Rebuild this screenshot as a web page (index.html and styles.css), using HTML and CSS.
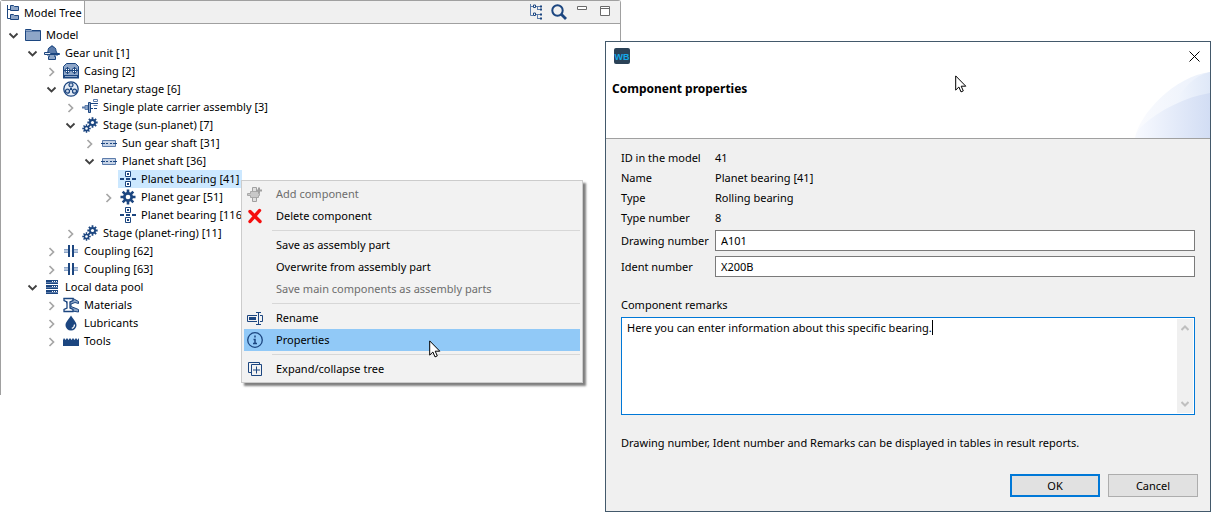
FILE: index.html
```
<!DOCTYPE html>
<html lang="en">
<head>
<meta charset="utf-8">
<title>Model Tree</title>
<link rel="stylesheet" href="styles.css">
</head>
<body>
<svg class="sprite" aria-hidden="true">
  <symbol id="down" viewBox="0 0 11 11"><path d="M1.5 3.5 5.5 7.5 9.5 3.5" fill="none" stroke="#404040" stroke-width="1.8"/></symbol>
  <symbol id="right" viewBox="0 0 11 11"><path d="M3.5 2 7.5 6 3.5 10" fill="none" stroke="#a6a6a6" stroke-width="1.7"/></symbol>
  <symbol id="tab-tree" viewBox="0 0 16 16"><path d="M1.5 0V13.5H4M1.5 4.500H4" fill="none" stroke="#1c4680"/><path d="M4.500 .500h3l1 1h4v4h-8zM4.500 9.500h3l1 1h4v4h-8z" fill="#8ea6c8" stroke="#1c4680"/></symbol>
  <symbol id="folder" viewBox="0 0 16 16"><path d="M.5 3.500V2.500H6L7 3.500H15.500V13.500H.5z" fill="#8ea6c8" stroke="#1c4680"/><path d="M1 4.500h14" stroke="#5c7cab"/></symbol>
  <symbol id="gearunit" viewBox="0 0 16 16"><path d="M4 6C4 3 5.500 2 7 2V1h2v1c2 0 3 1.500 3 4l2 4H3z" fill="#5c7cab" stroke="#1c4680"/><path d="M.5 7.500h5l1 1h9v1H10l-1 0H.5z" fill="#e5ecf5" stroke="#1c4680"/><path d="M5.500 10.500v1h-1v3h7v-3h-1v-1" fill="#8ea6c8" stroke="#1c4680"/></symbol>
  <symbol id="casing" viewBox="0 0 16 16"><path d="M.5 14V3.500L3.500.5h9l3 3V14z" fill="#8ea6c8" stroke="#1c4680"/><path d="M0 12h16v3.500H0z" fill="#1c4680"/><path d="M2 13.500h12" stroke="#8ea6c8"/><circle cx="4.500" cy="7.500" r="2.500" fill="#fff" stroke="#1c4680"/><circle cx="11.500" cy="7.500" r="2.500" fill="#fff" stroke="#1c4680"/><path d="M1 7.500h14M4.500 4v7M11.500 4v7" stroke="#1c4680"/></symbol>
  <symbol id="planetary" viewBox="0 0 16 16"><circle cx="8" cy="8" r="7.200" fill="#e5ecf5" stroke="#1c4680" stroke-width="1.300"/><g fill="#c6d3e6" stroke="#1c4680" stroke-width="1.200"><circle cx="8" cy="4" r="2"/><circle cx="4.500" cy="10.200" r="2"/><circle cx="11.500" cy="10.200" r="2"/></g><circle cx="8" cy="8" r="1.200" fill="#1c4680"/></symbol>
  <symbol id="carrier" viewBox="0 0 16 16"><path d="M0 8.500h6" stroke="#5c7cab" stroke-width="2"/><path d="M3 6.500h3v4H3z" fill="#8ea6c8" stroke="#5c7cab"/><path d="M6.500 3.500h2v10h-2z" fill="#8ea6c8" stroke="#1c4680"/><path d="M9 4.500h7M9 9.500h2M12 9.500h3" stroke="#1c4680"/><path d="M11.500.5v2h4v-2zM11.500 6.500h4" fill="none" stroke="#5c7cab"/></symbol>
  <symbol id="cog" viewBox="0 0 16 16"><g stroke="#1c4680" stroke-width="2.600"><path d="M8 .5v15M.5 8h15M2.700 2.700l10.600 10.600M13.300 2.700 2.700 13.300"/></g><circle cx="8" cy="8" r="5" fill="#1c4680"/><circle cx="8" cy="8" r="2.300" fill="#fff"/></symbol>
  <symbol id="cogs" viewBox="0 0 16 16"><use href="#cog" x="5" y="0" width="11" height="11"/><use href="#cog" x="0" y="7" width="9" height="9"/></symbol>
  <symbol id="shaft" viewBox="0 0 16 16"><path d="M1.500 5.500h13v6h-13z" fill="#c6d3e6" stroke="#5c7cab"/><path d="M0 8.500h4M5 8.500h2M9 8.500h2M12 8.500h4" stroke="#1c4680"/></symbol>
  <symbol id="bearing" viewBox="0 0 16 16"><path d="M5.500.5h5v5h-5zM5.500 10.500h5v5h-5z" fill="#fff" stroke="#1c4680"/><path d="M7 2h2v2H7zM7 12h2v2H7zM0 7h4v2H0zM6 7h4v2H6zM12 7h4v2h-4z" fill="#1c4680"/></symbol>
  <symbol id="coupling" viewBox="0 0 16 16"><path d="M1 6h5v4H1zM10 6h5v4h-5z" fill="#8ea6c8"/><path d="M1 8h14" stroke="#e5ecf5"/><path d="M5 2h2v12H5zM9 2h2v12H9z" fill="#1c4680"/></symbol>
  <symbol id="pool" viewBox="0 0 16 16"><path d="M2 1h12v4H2zM2 6h12v4H2zM2 11h12v4H2z" fill="#1c4680"/><path d="M2 3.500h12M2 8.500h12M2 13.500h12" stroke="#5c7cab"/><path d="M8 2.500h1M10 2.500h1M12 2.500h1M8 7.500h1M10 7.500h1M12 7.500h1M8 12.500h1M10 12.500h1M12 12.500h1" stroke="#fff"/></symbol>
  <symbol id="materials" viewBox="0 0 16 16"><path d="M1 1.500h9l5.500 3v2L12 5.500 8 7v2.500l7.500 3v2.500L9 14z" fill="#8ea6c8" stroke="#1c4680"/><path d="M1 1.500h9v2L7 5v6l3 1.500v2H1v-2L4 11V5L1 3.500z" fill="#fff" stroke="#1c4680" stroke-width="1.300"/></symbol>
  <symbol id="drop" viewBox="0 0 16 16"><path d="M8 .5C10 4 13.500 7 13.500 10.300a5.500 5.300 0 0 1-11 0C2.500 7 6 4 8 .5z" fill="#1c4680"/><path d="M11.500 9.500c0 2-1 3.300-2.700 3.800" fill="none" stroke="#fff" stroke-width="1.200"/></symbol>
  <symbol id="tools" viewBox="0 0 16 16"><path d="M0 13V7l1-2 1.500 2 1.500-2 1.500 2L7 5l1.500 2L10 5l1.500 2L13 5l1.500 2L16 5v8z" fill="#1c4680"/></symbol>
  <symbol id="add" viewBox="0 0 16 16"><path d="M5.500 1.500h4v4h-4zM5.500 11.500h4v4h-4z" fill="#e0e0e0" stroke="#a0a0a0"/><path d="M.5 7.500h3v-2h8v2h1v2h-1v2h-8v-2h-3z" fill="#c8c8c8" stroke="#a8a8a8"/><path d="M12 1.500v6M9 4.500h6" stroke="#a0a0a0" stroke-width="2"/></symbol>
  <symbol id="delete" viewBox="0 0 16 16"><path d="M3 3.500 13 13.500M12.500 2.500 3 13.500" stroke="#f50f0f" stroke-width="3.400" stroke-linecap="round"/></symbol>
  <symbol id="rename" viewBox="0 0 16 16"><path d="M10 5.500H.5v6H10M13 5.500h2.500v6H13M9 2.500h5M9 14.500h5M11.500 2.500v12" fill="none" stroke="#1c4680"/><path d="M2 7h7v3H2z" fill="#1c4680"/></symbol>
  <symbol id="info" viewBox="0 0 16 16"><circle cx="8" cy="8" r="7.300" fill="none" stroke="#1c4680" stroke-width="1.300"/><path d="M8 3.500v2M6.500 7.500H8v4M6 11.500h4" fill="none" stroke="#1c4680" stroke-width="1.500"/></symbol>
  <symbol id="expand" viewBox="0 0 16 16"><path d="M4 11.500H1.500V1.500h11V4" fill="none" stroke="#1c4680"/><path d="M4.500 3.500h10v11h-10zM9.500 5.500v7M6 9h7" fill="#f2f2f2" stroke="#1c4680"/></symbol>
  <symbol id="show-tree" viewBox="0 0 14 16"><path d="M1.500 0v11.500H4M1.500 2.500H4M7 2.500h5M8 5.500h4M7 10.500h5M8 14.500h4M8.500 2v4M8.500 10v5" fill="none" stroke="#5c7cab"/><path d="M4.500 1v2.500h2V1zM4.500 9v2.500h2V9z" fill="#fff" stroke="#1c4680"/><path d="M11 2.500h2M11 5.500h2M11 10.500h2M11 14.500h2" stroke="#1c4680" stroke-width="1.800"/></symbol>
  <symbol id="search" viewBox="0 0 16 16"><circle cx="6.500" cy="6.500" r="5.200" fill="none" stroke="#1c4680" stroke-width="2"/><path d="m10 10 5 5" stroke="#1c4680" stroke-width="2.800"/></symbol>
  <symbol id="minimize" viewBox="0 0 10 10"><path d="M.5.5h9v3h-9z" fill="#fff" stroke="#6a6a6a"/></symbol>
  <symbol id="maximize" viewBox="0 0 10 10"><path d="M.5.5h9v9h-9zM.5 2.500h9" fill="#fff" stroke="#6a6a6a"/></symbol>
  <symbol id="pointer" viewBox="0 0 12 18"><path d="M.7.9v14.200l3.200-3.100 2.100 4.900 2.300-1-2.100-4.700h4.600z" fill="#fff" stroke="#000"/></symbol>
</svg>

<main class="desktop">
  <section class="panel">
    <header class="panel-bar">
      <h1 class="tab"><svg class="icon"><use href="#tab-tree"/></svg>Model Tree</h1>
      <div class="tools">
        <button class="tool" aria-label="Show hierarchy"><svg class="icon-tree"><use href="#show-tree"/></svg></button>
        <button class="tool" aria-label="Search"><svg class="icon"><use href="#search"/></svg></button>
        <button class="tool" aria-label="Minimize"><svg class="icon-window"><use href="#minimize"/></svg></button>
        <button class="tool" aria-label="Maximize"><svg class="icon-window"><use href="#maximize"/></svg></button>
      </div>
    </header>
    <ul class="tree">
      <li><div class="row"><button class="toggle" aria-label="Collapse"><svg><use href="#down"/></svg></button><span class="node"><svg class="icon"><use href="#folder"/></svg>Model</span></div>
        <ul>
          <li><div class="row"><button class="toggle" aria-label="Collapse"><svg><use href="#down"/></svg></button><span class="node"><svg class="icon"><use href="#gearunit"/></svg>Gear unit [1]</span></div>
            <ul>
              <li><div class="row"><button class="toggle" aria-label="Expand"><svg><use href="#right"/></svg></button><span class="node"><svg class="icon"><use href="#casing"/></svg>Casing [2]</span></div></li>
              <li><div class="row"><button class="toggle" aria-label="Collapse"><svg><use href="#down"/></svg></button><span class="node"><svg class="icon"><use href="#planetary"/></svg>Planetary stage [6]</span></div>
                <ul>
                  <li><div class="row"><button class="toggle" aria-label="Expand"><svg><use href="#right"/></svg></button><span class="node"><svg class="icon"><use href="#carrier"/></svg>Single plate carrier assembly [3]</span></div></li>
                  <li><div class="row"><button class="toggle" aria-label="Collapse"><svg><use href="#down"/></svg></button><span class="node"><svg class="icon"><use href="#cogs"/></svg>Stage (sun-planet) [7]</span></div>
                    <ul>
                      <li><div class="row"><button class="toggle" aria-label="Expand"><svg><use href="#right"/></svg></button><span class="node"><svg class="icon"><use href="#shaft"/></svg>Sun gear shaft [31]</span></div></li>
                      <li><div class="row"><button class="toggle" aria-label="Collapse"><svg><use href="#down"/></svg></button><span class="node"><svg class="icon"><use href="#shaft"/></svg>Planet shaft [36]</span></div>
                        <ul>
                          <li><div class="row"><span class="toggle"></span><span class="node selected"><svg class="icon"><use href="#bearing"/></svg>Planet bearing [41]</span></div></li>
                          <li><div class="row"><button class="toggle" aria-label="Expand"><svg><use href="#right"/></svg></button><span class="node"><svg class="icon"><use href="#cog"/></svg>Planet gear [51]</span></div></li>
                          <li><div class="row"><span class="toggle"></span><span class="node"><svg class="icon"><use href="#bearing"/></svg>Planet bearing [116]</span></div></li>
                        </ul>
                      </li>
                    </ul>
                  </li>
                  <li><div class="row"><button class="toggle" aria-label="Expand"><svg><use href="#right"/></svg></button><span class="node"><svg class="icon"><use href="#cogs"/></svg>Stage (planet-ring) [11]</span></div></li>
                </ul>
              </li>
              <li><div class="row"><button class="toggle" aria-label="Expand"><svg><use href="#right"/></svg></button><span class="node"><svg class="icon"><use href="#coupling"/></svg>Coupling [62]</span></div></li>
              <li><div class="row"><button class="toggle" aria-label="Expand"><svg><use href="#right"/></svg></button><span class="node"><svg class="icon"><use href="#coupling"/></svg>Coupling [63]</span></div></li>
            </ul>
          </li>
          <li><div class="row"><button class="toggle" aria-label="Collapse"><svg><use href="#down"/></svg></button><span class="node"><svg class="icon"><use href="#pool"/></svg>Local data pool</span></div>
            <ul>
              <li><div class="row"><button class="toggle" aria-label="Expand"><svg><use href="#right"/></svg></button><span class="node"><svg class="icon"><use href="#materials"/></svg>Materials</span></div></li>
              <li><div class="row"><button class="toggle" aria-label="Expand"><svg><use href="#right"/></svg></button><span class="node"><svg class="icon"><use href="#drop"/></svg>Lubricants</span></div></li>
              <li><div class="row"><button class="toggle" aria-label="Expand"><svg><use href="#right"/></svg></button><span class="node"><svg class="icon"><use href="#tools"/></svg>Tools</span></div></li>
            </ul>
          </li>
        </ul>
      </li>
    </ul>

    <div class="menu" role="menu">
      <button class="item" role="menuitem" disabled><svg class="icon"><use href="#add"/></svg>Add component</button>
      <button class="item" role="menuitem"><svg class="icon"><use href="#delete"/></svg>Delete component</button>
      <hr>
      <button class="item" role="menuitem"><span class="icon"></span>Save as assembly part</button>
      <button class="item" role="menuitem"><span class="icon"></span>Overwrite from assembly part</button>
      <button class="item" role="menuitem" disabled><span class="icon"></span>Save main components as assembly parts</button>
      <hr>
      <button class="item" role="menuitem"><svg class="icon"><use href="#rename"/></svg>Rename</button>
      <button class="item active" role="menuitem"><svg class="icon"><use href="#info"/></svg>Properties</button>
      <hr>
      <button class="item" role="menuitem"><svg class="icon"><use href="#expand"/></svg>Expand/collapse tree</button>
      <svg class="pointer menu-pointer"><use href="#pointer"/></svg>
    </div>
  </section>

  <form class="dialog" role="dialog" aria-labelledby="dialog-title">
    <header class="dialog-head">
      <svg class="wave" viewBox="0 0 75 66" aria-hidden="true">
        <defs>
          <linearGradient id="wave-a"><stop offset="0" stop-color="#fafbfe"/><stop offset="1" stop-color="#eaf0fb"/></linearGradient>
          <linearGradient id="wave-b"><stop offset="0" stop-color="#f8faff"/><stop offset="1" stop-color="#d2ddf4"/></linearGradient>
          <linearGradient id="wave-c"><stop offset="0" stop-color="#f2f6fd"/><stop offset="1" stop-color="#dfe8f8"/></linearGradient>
        </defs>
        <path d="M0 66C4 42 40 4 75 0V66z" fill="url(#wave-a)"/>
        <path d="M40 32C48 15 59 4 75 0V66z" fill="url(#wave-c)"/>
        <path d="M0 66Q2 58 8 53C25 38 50 25 75 21V66z" fill="url(#wave-b)"/>
      </svg>
      <div class="titlebar">
        <svg class="icon" viewBox="0 0 16 16" role="img" aria-label="WB"><rect width="16" height="16" rx="2" fill="#2b4257"/><text x="8" y="12" class="logo-text">WB</text></svg>
        <button class="close" type="button" aria-label="Close"><svg viewBox="0 0 11 11"><path d="m.5.5 10 10M10.500.5l-10 10" stroke="#000"/></svg></button>
      </div>
      <h2 id="dialog-title">Component properties</h2>
      <svg class="pointer head-pointer"><use href="#pointer"/></svg>
    </header>
    <div class="dialog-body">
      <div class="fields">
        <span>ID in the model</span><span>41</span>
        <span>Name</span><span>Planet bearing [41]</span>
        <span>Type</span><span>Rolling bearing</span>
        <span>Type number</span><span>8</span>
        <label for="drawing">Drawing number</label><input id="drawing" type="text" value="A101">
        <label for="ident">Ident number</label><input id="ident" type="text" value="X200B">
      </div>
      <div class="remarks">
        <label for="remarks">Component remarks</label>
        <div class="remarks-box">
          <textarea id="remarks">Here you can enter information about this specific bearing.</textarea>
          <span class="caret"></span>
          <div class="scrollbar" aria-hidden="true">
            <svg viewBox="0 0 8 8"><path d="M.5 6 4 2.500 7.500 6" fill="none" stroke="#bfbfbf" stroke-width="2"/></svg>
            <svg viewBox="0 0 8 8"><path d="M.5 2 4 5.500 7.500 2" fill="none" stroke="#bfbfbf" stroke-width="2"/></svg>
          </div>
        </div>
      </div>
      <p class="note">Drawing number, Ident number and Remarks can be displayed in tables in result reports.</p>
    </div>
    <footer class="actions">
      <button class="btn primary" type="button">OK</button>
      <button class="btn" type="button">Cancel</button>
    </footer>
  </form>
</main>
</body>
</html>
```
FILE: styles.css
```
* { box-sizing: border-box; }

body {
  margin: 0;
  background: #fff;
  color: #000;
  font: 11px/15px "Noto Sans", "Open Sans", sans-serif;
}

button, input, textarea { font: inherit; color: inherit; }
button { margin: 0; padding: 0; border: 0; background: none; }
h1, h2, p, ul { margin: 0; padding: 0; }
ul { list-style: none; }
svg { display: block; }

.sprite { position: absolute; width: 0; height: 0; }
.icon { flex: none; width: 16px; height: 16px; }

.desktop {
  display: grid;
  grid-template-columns: 605fr 606fr;
  align-items: start;
  min-height: 100vh;
}

/* Model tree panel */
.panel {
  position: relative;
  margin-right: -16px;
  padding-bottom: 45px;
  border: 1px solid #a0a0a0;
  border-bottom: 0;
  border-radius: 3px 3px 0 0;
  line-height: 14px;
}
.panel-bar {
  display: flex;
  justify-content: space-between;
  height: 23px;
  background: #f0f0f0;
  border-bottom: 1px solid #a0a0a0;
}
.tab {
  display: flex;
  align-items: center;
  gap: 2px;
  height: 23px;
  padding: 0 2px 0 5px;
  background: #fff;
  border-right: 1px solid #a0a0a0;
  font-size: 11px;
  font-weight: normal;
}
.tools { display: flex; gap: 8px; padding: 3px 10px 0 0; }
.tool { display: flex; align-items: flex-start; height: 16px; }
.tool:nth-child(n+3) { margin-left: 2px; padding-top: 2px; }
.tool + .tool:last-child { margin-left: 5px; }
.icon-tree { width: 14px; height: 16px; }
.icon-window { width: 10px; height: 10px; }

.tree { padding: 2px 0 0 7px; }
.tree ul { padding-left: 19px; }
.row { display: flex; align-items: center; height: 18px; }
.toggle { flex: none; width: 11px; height: 11px; margin-right: 4px; }
.toggle svg { width: 11px; height: 11px; }
.node {
  display: flex;
  align-items: center;
  gap: 5px;
  height: 18px;
  padding: 0 3px 0 2px;
  white-space: nowrap;
}
.selected { background: #cce8ff; }

/* Context menu */
.menu {
  position: absolute;
  top: 179px;
  left: 240px;
  width: 342px;
  padding: 2px;
  background: #f2f2f2;
  border: 1px solid #ccc;
  box-shadow: 3px 3px 2px rgba(0, 0, 0, .5);
}
.item {
  display: flex;
  align-items: center;
  gap: 13px;
  width: 100%;
  height: 22px;
  padding-left: 3px;
  text-align: left;
}
.item:disabled { color: #6d6d6d; }
.active { background: #91c9f7; }
.menu hr {
  height: 1px;
  margin: 3px 0 3px 28px;
  border: 0;
  background: #d7d7d7;
}
.pointer { position: absolute; width: 12px; height: 18px; }
.menu-pointer { top: 159px; left: 187px; }

/* Properties dialog */
.dialog {
  position: relative;
  margin-top: 41px;
  background: #f0f0f0;
  border: 1px solid #43596b;
}
.dialog-head {
  position: relative;
  height: 97px;
  padding: 6px 10px 0 6px;
  background: #fff;
  border-bottom: 1px solid #a0a0a0;
}
.titlebar {
  position: relative;
  display: flex;
  align-items: center;
  justify-content: space-between;
  padding-left: 2px;
}
.close svg { width: 11px; height: 11px; }
.logo-text {
  fill: #16a8e8;
  font: bold 9px "Liberation Sans", sans-serif;
  text-anchor: middle;
}
.dialog-head h2 {
  padding-top: 17px;
  font-size: 12px;
  line-height: 16px;
}
.wave { position: absolute; right: 0; bottom: 0; width: 75px; height: 66px; }
.head-pointer { top: 33px; left: 349px; }

.dialog-body { padding: 11px 15px 0; }
.fields {
  display: grid;
  grid-template-columns: 89px 1fr;
  align-items: center;
  gap: 5px;
}
.fields input {
  width: 100%;
  height: 21px;
  padding: 0 5px;
  background: #fff;
  border: 1px solid #7a7a7a;
}
.remarks { display: grid; gap: 5px; margin-top: 20px; }
.remarks-box {
  position: relative;
  display: flex;
  height: 98px;
  padding: 1px;
  background: #fff;
  border: 1px solid #0078d7;
}
.remarks-box textarea {
  flex: 1;
  padding: 1px 4px;
  border: 0;
  outline: 0;
  resize: none;
  background: #fff;
}
.caret {
  position: absolute;
  top: 2px;
  left: 310px;
  width: 1px;
  height: 15px;
  background: #000;
}
.scrollbar {
  display: flex;
  flex-direction: column;
  align-items: center;
  justify-content: space-between;
  width: 16px;
  padding: 5px 0;
  background: #f0f0f0;
}
.scrollbar svg { width: 8px; height: 8px; }
.note { margin-top: 20px; }

.actions {
  display: flex;
  justify-content: flex-end;
  gap: 8px;
  padding: 24px 12px 14px;
}
.btn {
  width: 90px;
  height: 23px;
  background: #e1e1e1;
  border: 1px solid #adadad;
}
.primary { border: 2px solid #0078d7; }
```
